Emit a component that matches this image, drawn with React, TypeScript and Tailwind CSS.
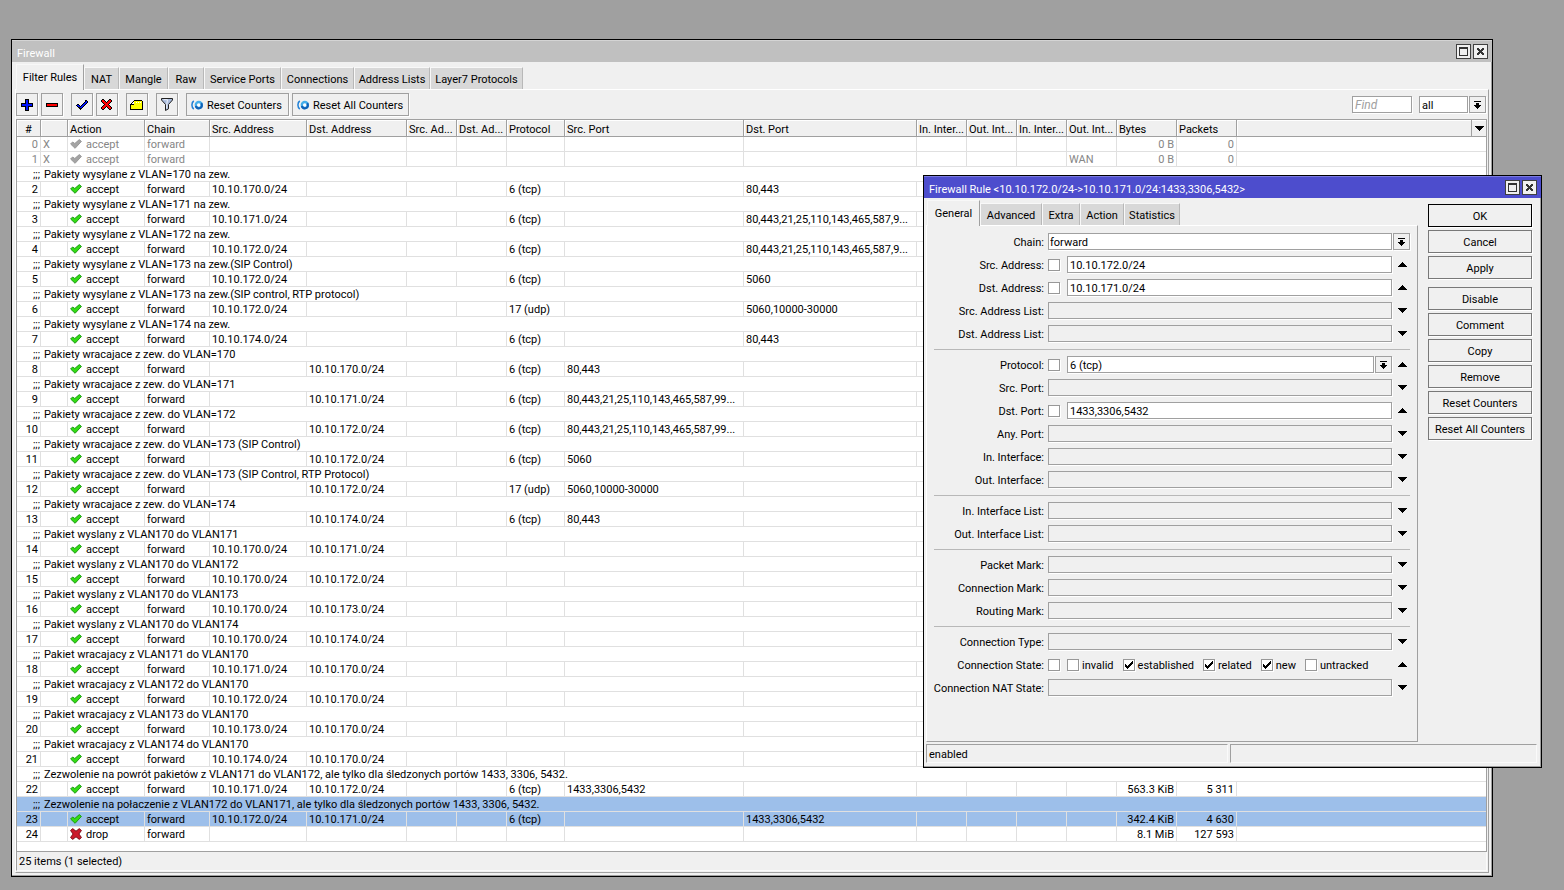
import React from 'react';

interface Rule {
  id: number;
  comment?: string;
  action: 'accept' | 'drop';
  src?: string;
  dst?: string;
  protocol?: string;
  srcPort?: string;
  dstPort?: string;
  outList?: string;
  bytes?: string;
  packets?: string;
  disabled?: boolean;
  selected?: boolean;
}

const RULES: Rule[] = [
  { id: 0, action: 'accept', bytes: '0 B', packets: '0', disabled: true },
  { id: 1, action: 'accept', outList: 'WAN', bytes: '0 B', packets: '0', disabled: true },
  { id: 2, comment: 'Pakiety wysylane z VLAN=170 na zew.', action: 'accept', src: '10.10.170.0/24', protocol: '6 (tcp)', dstPort: '80,443' },
  { id: 3, comment: 'Pakiety wysylane z VLAN=171 na zew.', action: 'accept', src: '10.10.171.0/24', protocol: '6 (tcp)', dstPort: '80,443,21,25,110,143,465,587,9...' },
  { id: 4, comment: 'Pakiety wysylane z VLAN=172 na zew.', action: 'accept', src: '10.10.172.0/24', protocol: '6 (tcp)', dstPort: '80,443,21,25,110,143,465,587,9...' },
  { id: 5, comment: 'Pakiety wysylane z VLAN=173 na zew.(SIP Control)', action: 'accept', src: '10.10.172.0/24', protocol: '6 (tcp)', dstPort: '5060' },
  { id: 6, comment: 'Pakiety wysylane z VLAN=173 na zew.(SIP control, RTP protocol)', action: 'accept', src: '10.10.172.0/24', protocol: '17 (udp)', dstPort: '5060,10000-30000' },
  { id: 7, comment: 'Pakiety wysylane z VLAN=174 na zew.', action: 'accept', src: '10.10.174.0/24', protocol: '6 (tcp)', dstPort: '80,443' },
  { id: 8, comment: 'Pakiety wracajace z zew. do VLAN=170', action: 'accept', dst: '10.10.170.0/24', protocol: '6 (tcp)', srcPort: '80,443' },
  { id: 9, comment: 'Pakiety wracajace z zew. do VLAN=171', action: 'accept', dst: '10.10.171.0/24', protocol: '6 (tcp)', srcPort: '80,443,21,25,110,143,465,587,99...' },
  { id: 10, comment: 'Pakiety wracajace z zew. do VLAN=172', action: 'accept', dst: '10.10.172.0/24', protocol: '6 (tcp)', srcPort: '80,443,21,25,110,143,465,587,99...' },
  { id: 11, comment: 'Pakiety wracajace z zew. do VLAN=173 (SIP Control)', action: 'accept', dst: '10.10.172.0/24', protocol: '6 (tcp)', srcPort: '5060' },
  { id: 12, comment: 'Pakiety wracajace z zew. do VLAN=173 (SIP Control, RTP Protocol)', action: 'accept', dst: '10.10.172.0/24', protocol: '17 (udp)', srcPort: '5060,10000-30000' },
  { id: 13, comment: 'Pakiety wracajace z zew. do VLAN=174', action: 'accept', dst: '10.10.174.0/24', protocol: '6 (tcp)', srcPort: '80,443' },
  { id: 14, comment: 'Pakiet wyslany z VLAN170 do VLAN171', action: 'accept', src: '10.10.170.0/24', dst: '10.10.171.0/24' },
  { id: 15, comment: 'Pakiet wyslany z VLAN170 do VLAN172', action: 'accept', src: '10.10.170.0/24', dst: '10.10.172.0/24' },
  { id: 16, comment: 'Pakiet wyslany z VLAN170 do VLAN173', action: 'accept', src: '10.10.170.0/24', dst: '10.10.173.0/24' },
  { id: 17, comment: 'Pakiet wyslany z VLAN170 do VLAN174', action: 'accept', src: '10.10.170.0/24', dst: '10.10.174.0/24' },
  { id: 18, comment: 'Pakiet wracajacy z VLAN171 do VLAN170', action: 'accept', src: '10.10.171.0/24', dst: '10.10.170.0/24' },
  { id: 19, comment: 'Pakiet wracajacy z VLAN172 do VLAN170', action: 'accept', src: '10.10.172.0/24', dst: '10.10.170.0/24' },
  { id: 20, comment: 'Pakiet wracajacy z VLAN173 do VLAN170', action: 'accept', src: '10.10.173.0/24', dst: '10.10.170.0/24' },
  { id: 21, comment: 'Pakiet wracajacy z VLAN174 do VLAN170', action: 'accept', src: '10.10.174.0/24', dst: '10.10.170.0/24' },
  { id: 22, comment: 'Zezwolenie na powrót pakietów z VLAN171 do VLAN172, ale tylko dla śledzonych portów 1433, 3306, 5432.', action: 'accept', src: '10.10.171.0/24', dst: '10.10.172.0/24', protocol: '6 (tcp)', srcPort: '1433,3306,5432', bytes: '563.3 KiB', packets: '5 311' },
  { id: 23, comment: 'Zezwolenie na połaczenie z VLAN172 do VLAN171, ale tylko dla śledzonych portów 1433, 3306, 5432.', action: 'accept', src: '10.10.172.0/24', dst: '10.10.171.0/24', protocol: '6 (tcp)', dstPort: '1433,3306,5432', bytes: '342.4 KiB', packets: '4 630', selected: true },
  { id: 24, action: 'drop', bytes: '8.1 MiB', packets: '127 593' },
];

const COLUMNS = [
  { label: '#', width: 'w-[24px]' },
  { label: '', width: 'w-[27px]' },
  { label: 'Action', width: 'w-[77px]' },
  { label: 'Chain', width: 'w-[65px]' },
  { label: 'Src. Address', width: 'w-[97px]' },
  { label: 'Dst. Address', width: 'w-[100px]' },
  { label: 'Src. Ad...', width: 'w-[50px]' },
  { label: 'Dst. Ad...', width: 'w-[50px]' },
  { label: 'Protocol', width: 'w-[58px]' },
  { label: 'Src. Port', width: 'w-[179px]' },
  { label: 'Dst. Port', width: 'w-[173px]' },
  { label: 'In. Inter...', width: 'w-[50px]' },
  { label: 'Out. Int...', width: 'w-[50px]' },
  { label: 'In. Inter...', width: 'w-[50px]' },
  { label: 'Out. Int...', width: 'w-[50px]' },
  { label: 'Bytes', width: 'w-[60px]' },
  { label: 'Packets', width: 'w-[60px]' },
];

const MAIN_TABS = [
  { label: 'Filter Rules', width: 'w-[68px]' },
  { label: 'NAT', width: 'w-[35px]' },
  { label: 'Mangle', width: 'w-[49px]' },
  { label: 'Raw', width: 'w-[36px]' },
  { label: 'Service Ports', width: 'w-[77px]' },
  { label: 'Connections', width: 'w-[73px]' },
  { label: 'Address Lists', width: 'w-[76px]' },
  { label: 'Layer7 Protocols', width: 'w-[93px]' },
];

const RULE_TABS = [
  { label: 'General', width: 'w-[53px]' },
  { label: 'Advanced', width: 'w-[62px]' },
  { label: 'Extra', width: 'w-[38px]' },
  { label: 'Action', width: 'w-[44px]' },
  { label: 'Statistics', width: 'w-[56px]' },
];

/* ---------- icons ---------- */

const PlusIcon = () => (
  <svg width="12" height="12" viewBox="0 0 12 12" shapeRendering="crispEdges">
    <path d="M4 0h4v4h4v4H8v4H4V8H0V4h4z" fill="#000" />
    <path d="M5 1h2v4h4v2H7v4H5V7H1V5h4z" fill="#0014ff" />
  </svg>
);

const MinusIcon = () => (
  <svg width="12" height="4" viewBox="0 0 12 4" shapeRendering="crispEdges">
    <path d="M0 0h12v4H0z" fill="#000" />
    <path d="M1 1h10v2H1z" fill="#f00" />
  </svg>
);

const EnableIcon = () => (
  <svg width="12" height="10" viewBox="0 0 12 10" shapeRendering="crispEdges">
    <path d="M9 0h2v1h1v2h-1v1h-1v1H9v1H8v1H7v1H6v1H5v1H4V9H3V8H2V7H1V6H0V5h1V4h2v1h1v1h1V5h1V4h1V3h1V2h1z" fill="#000" />
    <path d="M1 5h2v1h1v1h1V6h1V5h1V4h1V3h1V2h1V1h1v2h-1v1H9v1H8v1H7v1H6v1H4V7H2V6H1z" fill="#0014ff" />
  </svg>
);

const DisableIcon = () => (
  <svg width="12" height="11" viewBox="0 0 12 11" shapeRendering="crispEdges">
    <path d="M1 0h2v1h1v1h1v1h1V2h1V1h1V0h2v1h1v2h-1v1H9v1H8v1h1v1h1v1h1v2h-1v1H8v-1H7V9H6V8H5v1H4v1H3v1H1v-1H0V8h1V7h1V6h1V5H2V4H1V3H0V1h1z" fill="#000" />
    <path d="M1 1h2v1h1v1h1v1h1V3h1V2h1V1h2v2H9v1H8v1H7v1h1v1h1v1h1v2H8V9H7V8H6V7H5v1H4v1H3v1H1V8h1V7h1V6h1V5H3V4H2V3H1z" fill="#f00" />
  </svg>
);

const CommentIcon = () => (
  <svg width="14" height="10" viewBox="0 0 14 10" shapeRendering="crispEdges">
    <path d="M4 0h8v1h1v9H0V4h1V3h1V2h1V1h1z" fill="#000" />
    <path d="M4 1h8v8H1V5h3z" fill="#ff0" />
    <path d="M4 2v2H2V3h1V2z" fill="#fff" />
    <path d="M6 2h1v1H6zM8 2h1v1H8zM10 2h1v1h-1z" fill="#fff" />
  </svg>
);

const FilterIcon = () => (
  <svg width="12" height="13" viewBox="0 0 12 13">
    <path d="M.5.5h11v1.500L7.500 6.500v4.300L4.500 12.500v-6L.5 2z" fill="#a9bbdc" stroke="#222" strokeWidth="1" />
    <path d="M2.500 1.700h4L5.700 6.500v4" fill="none" stroke="#eef3fb" strokeWidth="1" />
  </svg>
);

const ResetIcon = () => (
  <svg width="12" height="10" viewBox="0 0 12 10">
    <path d="M2.800 1C.3 2.600 .3 7.400 2.800 9" fill="none" stroke="#1e7fd6" strokeWidth="1.500" />
    <circle cx="7.800" cy="5" r="3" fill="#fff" stroke="#45aeea" strokeWidth="2.300" />
    <path d="M4.900 6a3 3 0 0 0 5.900-1c0-.8-.2-1.300-.6-1.800" fill="none" stroke="#0f62b8" strokeWidth="2.200" />
  </svg>
);

const AcceptIcon = ({ muted }: { muted?: boolean }) => (
  <svg width="12" height="10" viewBox="0 0 12 10" className="shrink-0">
    <path
      d="M.6 5 2.600 3l2.200 1.500L9.300.6l2.100 1.800L5.100 9.300z"
      fill={muted ? '#a4a4a4' : '#33dd14'}
      stroke={muted ? '#989898' : '#1c9a12'}
      strokeWidth="1"
      strokeLinejoin="round"
    />
  </svg>
);

const DropIcon = () => (
  <svg width="12" height="12" viewBox="0 0 12 12" className="shrink-0">
    <path
      d="M.6 2.600 2.600.6 6 3.200 9.400.6l2 2L8.900 6l2.500 3.400-2 2L6 8.800l-3.400 2.600-2-2L3.100 6z"
      fill="#cc1a2b"
      stroke="#7c0c18"
      strokeWidth="1"
      strokeLinejoin="round"
    />
  </svg>
);

const DropdownIcon = () => (
  <svg width="7" height="8" viewBox="0 0 7 8" shapeRendering="crispEdges">
    <path d="M0 0h7v1H0zM2 2h3v2h2v1H6v1H5v1H4v1H3V7H2V6H1V5H0V4h2z" fill="#000" />
  </svg>
);

const DownIcon = () => (
  <svg width="9" height="5" viewBox="0 0 9 5" shapeRendering="crispEdges">
    <path d="M0 0h9v1H8v1H7v1H6v1H5v1H4V4H3V3H2V2H1V1H0z" fill="#000" />
  </svg>
);

const UpIcon = () => (
  <svg width="9" height="5" viewBox="0 0 9 5" shapeRendering="crispEdges">
    <path d="M4 0h1v1h1v1h1v1h1v1h1v1H0V4h1V3h1V2h1V1h1z" fill="#000" />
  </svg>
);

/* ---------- shared parts ---------- */

const TitleBar = ({ title, active }: { title: string; active?: boolean }) => (
  <div
    className={`flex h-[22px] items-center justify-between border-t pl-[5px] pr-[4px] text-white ${
      active ? 'border-[#7a7ae0] bg-[#4d4dcd]' : 'border-[#d4d4d4] bg-[#c0c0c0]'
    }`}
  >
    <h2 className="pt-[5px]">{title}</h2>
    <div className="flex gap-[2px]">
      <button aria-label="Maximize" className="flex h-[15px] w-[15px] items-center justify-center border border-[#404040] bg-[#f0f0f0]">
        <svg width="9" height="9" viewBox="0 0 9 9" shapeRendering="crispEdges">
          <path d="M0 0h9v9H0zM1 2v6h7V2z" fill="#333" fillRule="evenodd" />
        </svg>
      </button>
      <button aria-label="Close" className="flex h-[15px] w-[15px] items-center justify-center border border-[#404040] bg-[#f0f0f0]">
        <svg width="7" height="7" viewBox="0 0 7 7" shapeRendering="crispEdges">
          <path d="M0 0h2v1h1v1h1V1h1V0h2v2H6v1H5v1h1v1h1v2H5V6H4V5H3v1H2v1H0V5h1V4h1V3H1V2H0z" fill="#333" />
        </svg>
      </button>
    </div>
  </div>
);

const Tabs = ({ tabs }: { tabs: { label: string; width: string }[] }) => (
  <div role="tablist" className="flex h-[27px] items-end">
    {tabs.map((tab, i) => (
      <button
        key={tab.label}
        role="tab"
        aria-selected={i === 0}
        className={`whitespace-nowrap border-l border-t border-l-[#f8f8f8] border-t-[#f8f8f8] text-center ${tab.width} ${
          i === 0
            ? 'relative -mb-px h-[26px] border-r border-r-[#a0a0a0] bg-[#f0f0f0] pt-[1px]'
            : 'h-[22px] border-r border-r-[#b8b8b8] bg-[#d8d8d8] pt-[2px]'
        }`}
      >
        {tab.label}
      </button>
    ))}
  </div>
);

const ToolButton = ({ label, children }: { label: string; children: React.ReactNode }) => (
  <button
    aria-label={label}
    className="flex h-[23px] w-[22px] items-center justify-center border border-[#a0a0a0] bg-[#f0f0f0] shadow-[1px_1px_0_#fff]"
  >
    {children}
  </button>
);

const ResetButton = ({ label, width }: { label: string; width: string }) => (
  <button
    className={`flex h-[23px] items-center gap-[4px] whitespace-nowrap border border-[#a0a0a0] pl-[4px] shadow-[1px_1px_0_#fff] ${width}`}
  >
    <ResetIcon />
    <span className="pt-[2px]">{label}</span>
  </button>
);

const DropButton = ({ label }: { label: string }) => (
  <button
    aria-label={label}
    className="flex h-[17px] w-[17px] shrink-0 items-center justify-center border border-[#a0a0a0] bg-[#f0f0f0] shadow-[1px_1px_0_#fff]"
  >
    <DropdownIcon />
  </button>
);

/* ---------- rule list ---------- */

const RuleRows = ({ rule }: { rule: Rule }) => {
  const tone = `${rule.selected ? 'bg-[#9dbfea]' : 'bg-white'} ${rule.disabled ? 'text-[#868686]' : 'text-black'}`;
  const cell = 'h-[15px] overflow-hidden whitespace-nowrap border-b border-r border-[#e0e0e0] p-0 pl-[2px] pt-[2px] leading-[12px]';
  const blank = <td className={cell} />;

  return (
    <>
      {rule.comment && (
        <tr className={tone}>
          <td colSpan={18} className="h-[15px] whitespace-nowrap border-b border-[#e0e0e0] p-0 pl-[16px] pt-[2px] leading-[12px]">
            <div className="flex gap-[4px]">
              <span>;;;</span>
              <span>{rule.comment}</span>
            </div>
          </td>
        </tr>
      )}
      <tr className={tone}>
        <td className={`${cell} pr-[2px] text-right`}>{rule.id}</td>
        <td className={cell}>{rule.disabled ? 'X' : ''}</td>
        <td className="h-[15px] overflow-hidden whitespace-nowrap border-b border-r border-[#e0e0e0] p-0 pl-[2px] leading-[12px]">
          <div className="flex h-[14px] items-center gap-[4px]">
            {rule.action === 'accept' ? <AcceptIcon muted={rule.disabled} /> : <DropIcon />}
            <span className="pt-[2px]">{rule.action}</span>
          </div>
        </td>
        <td className={cell}>forward</td>
        <td className={cell}>{rule.src}</td>
        <td className={cell}>{rule.dst}</td>
        {blank}
        {blank}
        <td className={cell}>{rule.protocol}</td>
        <td className={cell}>{rule.srcPort}</td>
        <td className={cell}>{rule.dstPort}</td>
        {blank}
        {blank}
        {blank}
        <td className={cell}>{rule.outList}</td>
        <td className={`${cell} pr-[2px] text-right`}>{rule.bytes}</td>
        <td className={`${cell} pr-[2px] text-right`}>{rule.packets}</td>
        <td className="border-b border-[#e0e0e0] p-0" />
      </tr>
    </>
  );
};

const RuleTable = () => (
  <div className="border border-[#a0a0a0] bg-white pb-[9px]">
    <table className="w-full table-fixed border-separate border-spacing-0">
      <thead>
        <tr className="bg-[#f0f0f0]">
          {COLUMNS.map((col, i) => (
            <th
              key={i}
              className={`h-[17px] overflow-hidden whitespace-nowrap border-b border-r border-[#a0a0a0] p-0 pt-[3px] font-normal leading-[12px] shadow-[inset_1px_1px_0_#fff] ${
                i === 0 ? 'text-center' : 'pl-[2px] text-left'
              } ${col.width}`}
            >
              {col.label}
            </th>
          ))}
          <th className="h-[17px] border-b border-[#a0a0a0] p-0 shadow-[inset_1px_1px_0_#fff]">
            <button aria-label="Columns" className="ml-auto flex h-[16px] w-[15px] items-center justify-center border-l border-[#a0a0a0]">
              <DownIcon />
            </button>
          </th>
        </tr>
      </thead>
      <tbody>
        {RULES.map((rule) => (
          <RuleRows key={rule.id} rule={rule} />
        ))}
      </tbody>
    </table>
  </div>
);

const FirewallWindow = () => (
  <section className="absolute left-[11px] right-[71px] top-[39px] border border-black bg-[#f0f0f0] shadow-[inset_-1px_-1px_0_#a0a0a0]">
    <TitleBar title="Firewall" />
    <div className="px-[3px] pb-[3px]">
      <div className="pl-[1px]">
        <Tabs tabs={MAIN_TABS} />
      </div>
      <div className="border-b border-l border-r border-t border-b-[#a0a0a0] border-l-white border-r-[#a0a0a0] border-t-white">
        <div className="flex items-center pb-[3px] pr-[2px] pt-[3px]">
          <div className="flex gap-[3px]">
            <ToolButton label="Add"><PlusIcon /></ToolButton>
            <ToolButton label="Remove"><MinusIcon /></ToolButton>
          </div>
          <div className="ml-[8px] flex gap-[3px]">
            <ToolButton label="Enable"><EnableIcon /></ToolButton>
            <ToolButton label="Disable"><DisableIcon /></ToolButton>
          </div>
          <div className="ml-[8px] flex gap-[8px]">
            <ToolButton label="Comment"><CommentIcon /></ToolButton>
            <ToolButton label="Filter"><FilterIcon /></ToolButton>
          </div>
          <div className="ml-[8px] flex gap-[3px]">
            <ResetButton label="Reset Counters" width="w-[103px]" />
            <ResetButton label="Reset All Counters" width="w-[117px]" />
          </div>
          <div className="ml-auto flex items-center">
            <input
              aria-label="Find"
              placeholder="Find"
              className="h-[17px] w-[60px] border border-[#a0a0a0] bg-white pl-[2px] pt-[1px] text-xs italic shadow-[1px_1px_0_#fff] outline-none placeholder:text-[#a0a0a0]"
            />
            <select
              aria-label="Chain filter"
              className="ml-[7px] h-[17px] w-[49px] appearance-none border border-[#a0a0a0] bg-white pl-[2px] pt-[2px] leading-[13px] shadow-[1px_1px_0_#fff]"
            >
              <option>all</option>
            </select>
            <div className="ml-[1px]">
              <DropButton label="Open chain filter" />
            </div>
          </div>
        </div>
        <div className="pr-[1px]">
          <RuleTable />
          <p className="h-[19px] border-b border-l border-r border-b-[#fafafa] border-l-[#a0a0a0] border-r-[#fafafa] pl-[2px] leading-[20px]">
            25 items (1 selected)
          </p>
        </div>
        <div className="h-[1px]" />
      </div>
    </div>
  </section>
);

/* ---------- rule dialog ---------- */

interface FieldProps {
  label: string;
  value?: string;
  negate?: boolean;
  dropdown?: boolean;
  fixed?: boolean;
}

const GROUPS: FieldProps[][] = [
  [
    { label: 'Chain', value: 'forward', dropdown: true, fixed: true },
    { label: 'Src. Address', value: '10.10.172.0/24', negate: true },
    { label: 'Dst. Address', value: '10.10.171.0/24', negate: true },
    { label: 'Src. Address List' },
    { label: 'Dst. Address List' },
  ],
  [
    { label: 'Protocol', value: '6 (tcp)', negate: true, dropdown: true },
    { label: 'Src. Port' },
    { label: 'Dst. Port', value: '1433,3306,5432', negate: true },
    { label: 'Any. Port' },
    { label: 'In. Interface' },
    { label: 'Out. Interface' },
  ],
  [{ label: 'In. Interface List' }, { label: 'Out. Interface List' }],
  [{ label: 'Packet Mark' }, { label: 'Connection Mark' }, { label: 'Routing Mark' }],
];

const STATES = [
  { label: 'invalid', checked: false },
  { label: 'established', checked: true },
  { label: 'related', checked: true },
  { label: 'new', checked: true },
  { label: 'untracked', checked: false },
];

const CheckBox = ({ id, label, checked }: { id?: string; label?: string; checked?: boolean }) => (
  <span className="relative flex h-[12px] w-[12px] shrink-0">
    <input
      id={id}
      type="checkbox"
      aria-label={label}
      defaultChecked={checked}
      className="peer h-[12px] w-[12px] appearance-none border border-[#989898] bg-white shadow-[1px_1px_0_#fff]"
    />
    <svg
      width="8"
      height="8"
      viewBox="0 0 8 8"
      shapeRendering="crispEdges"
      className="pointer-events-none invisible absolute left-[2px] top-[2px] peer-checked:visible"
    >
      <path d="M7 0h1v3H7v1H6v1H5v1H4v1H3v1H2V7H1V6H0V3h1v1h1v1h1V4h1V3h1V2h1V1h1z" fill="#000" />
    </svg>
  </span>
);

const Toggle = ({ label, open }: { label: string; open?: boolean }) => (
  <button aria-label={`Toggle ${label}`} className="ml-[1px] flex h-[17px] w-[17px] shrink-0 items-center justify-center pl-[2px]">
    {open ? <UpIcon /> : <DownIcon />}
  </button>
);

const Field = ({ label, value, negate, dropdown, fixed }: FieldProps) => {
  const id = label.toLowerCase().replace(/[^a-z]+/g, '-');
  const box = `h-[17px] w-full min-w-0 flex-1 appearance-none border border-[#a0a0a0] pt-[2px] leading-[13px] shadow-[1px_1px_0_#fff] outline-none ${
    value ? 'bg-white' : 'bg-[#f0f0f0]'
  }`;
  return (
    <div className="flex h-[17px] items-center">
      <label htmlFor={id} className="w-[117px] shrink-0 whitespace-nowrap pt-[2px] text-right">
        {label}:
      </label>
      <div className="ml-[4px] flex min-w-0 flex-1 items-center">
        {negate && (
          <div className="mr-[7px]">
            <CheckBox label={`Not ${label}`} />
          </div>
        )}
        {dropdown ? (
          <select id={id} className={`${box} ${fixed ? 'pl-[1px]' : 'pl-[2px]'}`}>
            <option>{value}</option>
          </select>
        ) : (
          <input id={id} defaultValue={value} className={`${box} pl-[2px]`} />
        )}
        {dropdown && (
          <div className="ml-[1px]">
            <DropButton label={`Open ${label}`} />
          </div>
        )}
      </div>
      {!fixed && <Toggle label={label} open={!!value} />}
    </div>
  );
};

const Separator = () => <hr className="ml-[7px] h-[2px] border-b border-t-0 border-[#b8b8b8]" />;

const SideButton = ({ children, primary }: { children: React.ReactNode; primary?: boolean }) => (
  <button
    className={`h-[23px] whitespace-nowrap border bg-[#f0f0f0] pt-[2px] text-center shadow-[1px_1px_0_#fff] ${
      primary ? 'border-black' : 'border-[#787878]'
    }`}
  >
    {children}
  </button>
);

const RuleDialog = () => (
  <section className="absolute left-[923px] top-[175px] w-[619px] border border-black bg-[#f0f0f0] shadow-[inset_-1px_-1px_0_#a0a0a0]">
    <TitleBar title="Firewall Rule <10.10.172.0/24->10.10.171.0/24:1433,3306,5432>" active />
    <div className="flex pl-[2px] pr-[9px]">
      <div className="min-w-0 flex-1">
        <div className="pl-[1px]">
          <Tabs tabs={RULE_TABS} />
        </div>
        <form className="flex flex-col gap-[6px] border-b border-l border-r border-t border-b-[#a0a0a0] border-l-white border-r-[#a0a0a0] border-t-white pb-[45px] pr-[7px] pt-[7px]">
          {GROUPS.map((group, i) => (
            <React.Fragment key={i}>
              {group.map((field) => (
                <Field key={field.label} {...field} />
              ))}
              <Separator />
            </React.Fragment>
          ))}
          <Field label="Connection Type" />
          <fieldset className="flex h-[17px] items-center">
            <div className="w-[117px] shrink-0 whitespace-nowrap pt-[2px] text-right">Connection State:</div>
            <div className="ml-[4px] flex flex-1 items-center">
              <CheckBox label="Not Connection State" />
              <div className="ml-[7px] flex gap-[9px]">
                {STATES.map((state) => (
                  <div key={state.label} className="flex items-center gap-[3px]">
                    <CheckBox id={`state-${state.label}`} checked={state.checked} />
                    <label htmlFor={`state-${state.label}`} className="pt-[2px]">{state.label}</label>
                  </div>
                ))}
              </div>
            </div>
            <Toggle label="Connection State" open />
          </fieldset>
          <Field label="Connection NAT State" />
        </form>
      </div>
      <div className="ml-[10px] flex w-[104px] flex-col gap-[3px] pt-[6px]">
        <SideButton primary>OK</SideButton>
        <SideButton>Cancel</SideButton>
        <SideButton>Apply</SideButton>
        <div className="mt-[5px] flex flex-col gap-[3px]">
          <SideButton>Disable</SideButton>
          <SideButton>Comment</SideButton>
          <SideButton>Copy</SideButton>
          <SideButton>Remove</SideButton>
          <SideButton>Reset Counters</SideButton>
          <SideButton>Reset All Counters</SideButton>
        </div>
      </div>
    </div>
    <div className="flex gap-[2px] pb-[4px] pl-[2px] pr-[4px] pt-[2px]">
      <p className="h-[19px] w-[302px] border border-b-[#fafafa] border-l-[#a0a0a0] border-r-[#fafafa] border-t-[#a0a0a0] pl-[2px] leading-[20px]">enabled</p>
      <p className="h-[19px] flex-1 border border-b-[#fafafa] border-l-[#a0a0a0] border-r-[#fafafa] border-t-[#a0a0a0]" />
    </div>
  </section>
);

export default function App() {
  return (
    <main className="relative min-h-screen overflow-hidden bg-[#a0a0a0] font-[Roboto,'Liberation_Sans',sans-serif] text-[11px] leading-[14px] text-black">
      <FirewallWindow />
      <RuleDialog />
    </main>
  );
}
